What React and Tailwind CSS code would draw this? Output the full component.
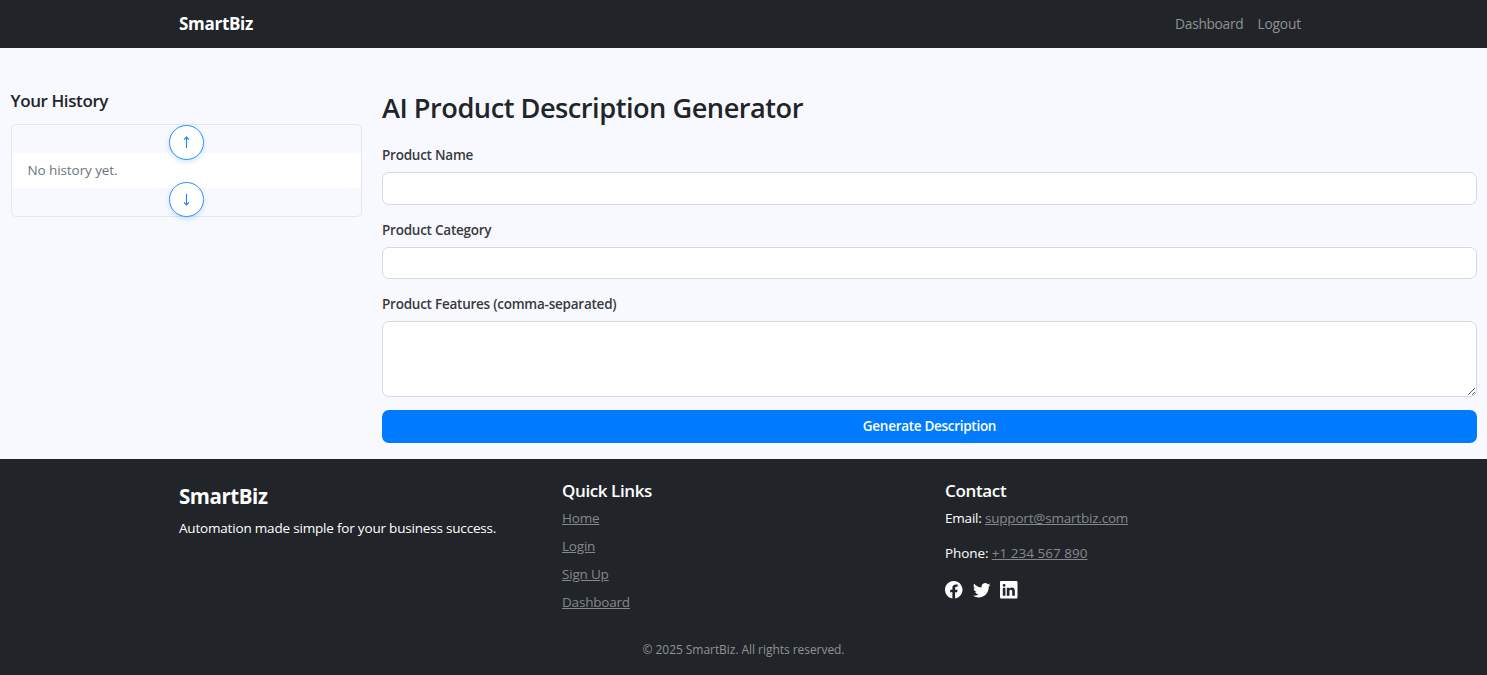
import { BsFacebook, BsTwitter, BsLinkedin } from 'react-icons/bs';

function Navbar() {
  return (
    <nav className="h-12 bg-[#212529]">
      <div className="mx-auto flex h-12 w-[1129px] items-center justify-between pr-[7px]">
        <a className="text-[17px] font-bold tracking-[-0.29px] text-white">SmartBiz</a>
        <div className="flex gap-[14px] text-[13.75px] leading-[20px] tracking-[-0.3px] text-[#909294]">
          <a>Dashboard</a>
          <a className="tracking-[-0.15px]">Logout</a>
        </div>
      </div>
    </nav>
  );
}

function ScrollButton({ label, children }) {
  return (
    <button
      aria-label={label}
      className="relative z-10 flex size-[35px] shrink-0 items-center justify-center rounded-full border border-[#2a91ff] bg-white shadow-[0_2px_5px_rgba(0,123,255,0.2)]"
    >
      <svg className="h-[14px] w-[9px]" viewBox="0 0 9 14" fill="none" stroke="#1685ff" strokeWidth="1.1">
        {children}
      </svg>
    </button>
  );
}

function History() {
  return (
    <aside className="w-[351px] shrink-0 pt-[42px]">
      <h5 className="mb-[12px] text-[17px] font-semibold leading-[22px] tracking-[-0.4px] text-[#212529]">Your History</h5>
      <div className="flex h-[93px] flex-col items-center rounded-[5px] border border-[#e4e7eb]">
        <div className="-mt-[0.5px] -mb-[6.5px] flex">
          <ScrollButton label="Scroll up">
            <path d="M4.5 13V2M2 4.6L4.5 2L7 4.6" />
          </ScrollButton>
        </div>
        <div className="w-full rounded-[5px] bg-white pl-[16px] text-[13.5px] leading-[35px] tracking-[-0.09px] text-[#6c757d]">
          No history yet.
        </div>
        <div className="-mt-[6px] flex">
          <ScrollButton label="Scroll down">
            <path d="M4.5 1V12M2 9.4L4.5 12L7 9.4" />
          </ScrollButton>
        </div>
      </div>
    </aside>
  );
}

function Field({ label, children }) {
  return (
    <label className="mb-[14px] block">
      <span className="mb-[6px] block pt-px text-[13.5px] font-semibold leading-[21px] tracking-[-0.24px] text-[#383b3e]">{label}</span>
      {children}
    </label>
  );
}

function GeneratorForm() {
  return (
    <section className="min-w-0 flex-1 pt-[43px]">
      <h2 className="mb-[19px] text-[27.2px] font-semibold leading-[34px] tracking-[-0.49px] text-[#212529]">AI Product Description Generator</h2>
      <Field label="Product Name">
        <input className="block h-[33px] w-full rounded-[7px] border border-[#d5dae0] bg-white px-3" />
      </Field>
      <Field label="Product Category">
        <input className="block h-[32.4px] w-full rounded-[7px] border border-[#d5dae0] bg-white px-3" />
      </Field>
      <Field label="Product Features (comma-separated)">
        <textarea className="block h-[75.6px] w-full resize-y rounded-[7px] border border-[#d5dae0] bg-white px-3" />
      </Field>
      <button className="-mt-px block h-[33px] w-full rounded-[7px] bg-[#007bff] text-[13.5px] font-semibold tracking-[-0.29px] text-white">
        Generate Description
      </button>
    </section>
  );
}

const links = ['Home', 'Login', 'Sign Up', 'Dashboard'];

function Footer() {
  return (
    <footer className="h-[216px] bg-[#212529] pt-[21px] text-[13.5px] text-white">
      <div className="mx-auto grid h-[159px] w-[1149px] grid-cols-3">
        <div className="pl-[10px]">
          <h4 className="mt-[3px] text-[20.5px] font-bold leading-[26px] tracking-[-0.45px]">SmartBiz</h4>
          <p className="mt-[9px] leading-[21px] tracking-[-0.19px]">Automation made simple for your business success.</p>
        </div>
        <div className="pl-[10px]">
          <h5 className="text-[17px] font-semibold leading-[22px] tracking-[-0.4px]">Quick Links</h5>
          <ul className="mt-[6px] flex flex-col gap-[7px] text-[#85888b]">
            {links.map((link) => (
              <li key={link} className="leading-[21px]">
                <a className="tracking-[-0.2px] underline">{link}</a>
              </li>
            ))}
          </ul>
        </div>
        <div className="pl-[10px]">
          <h5 className="text-[17px] font-semibold leading-[22px] tracking-[-0.35px]">Contact</h5>
          <p className="mt-[6px] leading-[21px] tracking-[-0.2px]">
            Email: <a className="text-[#85888b] underline">support@smartbiz.com</a>
          </p>
          <p className="mt-[14px] leading-[21px] tracking-[-0.1px]">
            Phone: <a className="tracking-[0.02px] text-[#85888b] underline">+1 234 567 890</a>
          </p>
          <div className="mt-[17px] flex gap-[10px]">
            <BsFacebook className="size-[17.5px]" />
            <BsTwitter className="size-[17.5px]" />
            <BsLinkedin className="size-[17.5px]" />
          </div>
        </div>
      </div>
      <p className="text-center text-[12px] leading-[21px] tracking-[-0.05px] text-[#909294]">
        © 2025 SmartBiz. All rights reserved.
      </p>
    </footer>
  );
}

export default function App() {
  return (
    <div className="flex h-[675px] flex-col overflow-hidden bg-[#f8f9fe] font-['Open_Sans',sans-serif]">
      <Navbar />
      <main className="flex h-[411px] gap-[20.5px] pr-[10px] pl-[10.5px]">
        <History />
        <GeneratorForm />
      </main>
      <Footer />
    </div>
  );
}
